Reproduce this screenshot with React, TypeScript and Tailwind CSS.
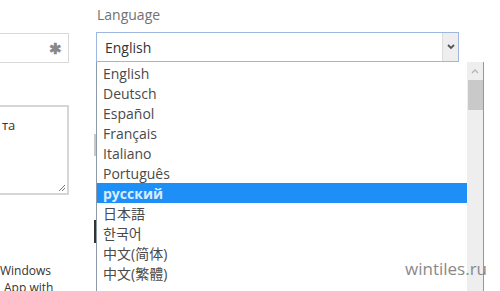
const languages = [
  'English',
  'Deutsch',
  'Español',
  'Français',
  'Italiano',
  'Português',
  'русский',
  '日本語',
  '한국어',
  '中文(简体)',
  '中文(繁體)',
]

const font = { fontFamily: '"Open Sans", "Noto Sans CJK JP", "Noto Sans CJK KR", sans-serif' }

export default function App() {
  return (
    <div
      className="relative w-[500px] h-[291px] overflow-hidden bg-white flex text-[#444]"
      style={font}
    >
      {/* left form column, cut at the window edge */}
      <div className="w-[109px] shrink-0 flex flex-col -ml-[40px]">
        <div className="shrink-0 mt-[33px] h-[30px] w-[109px] border border-[#d9d9d9] flex items-center justify-end pr-[6px]">
          <span className="text-[15px] text-[#888] font-bold leading-none">✱</span>
        </div>
        <div className="shrink-0 relative mt-[42px] h-[90px] w-[109px] border-2 border-[#d6d6d6] pl-[40px] pt-[5px]">
          <span className="text-[13px] text-[#333]">та</span>
          <svg className="absolute right-[1px] bottom-[1px]" width="9" height="9" viewBox="0 0 9 9">
            <path d="M8 2 L2 8 M8 5 L5 8" stroke="#777" strokeWidth="1" />
          </svg>
        </div>
        <div className="shrink-0 mt-[67px] pl-[40px] text-[12px] leading-[17px] text-[#333] whitespace-nowrap">
          <div>Windows</div>
          <div className="pl-[4px]">App with</div>
        </div>
      </div>

      {/* partly hidden bars behind the list */}
      <div className="ml-[25px] w-[2px] shrink-0 flex flex-col">
        <div className="shrink-0 mt-[134px] h-[22px] bg-[#c8c8c8]" />
        <div className="shrink-0 mt-[64px] h-[23px] bg-[#333]" />
      </div>

      {/* language field */}
      <div className="flex flex-col">
        <div className="shrink-0 h-[32px] pl-[1px] pt-[5px] text-[14px] leading-[20px] text-[#727272]">Language</div>
        <div className="shrink-0 w-[363px] h-[30px] border border-[#9eb7de] flex bg-white">
          <div className="flex-1 pl-[8px] flex items-center text-[14px] text-[#333]">English</div>
          <div className="w-[16px] bg-[#eeeeee] border-l border-[#dcdcdc] flex items-center justify-center">
            <svg width="8" height="6" viewBox="0 0 8 6">
              <path d="M1 1 L4 4 L7 1" fill="none" stroke="#555" strokeWidth="1.8" />
            </svg>
          </div>
        </div>
        <div className="shrink-0 w-[388px] h-[260px] border-l border-r border-[#8c9aa8] flex bg-white">
          <div className="flex-1 pt-[1px]">
            {languages.map((lang) => {
              const active = lang === 'русский'
              return (
                <div
                  key={lang}
                  className={
                    active
                      ? 'h-[20px] pl-[6px] flex items-center text-[14px] font-bold bg-[#1e8ff7] text-[#d9ecff]'
                      : 'h-[20px] pl-[6px] flex items-center text-[14px] text-[#4a4a4a]'
                  }
                >
                  {lang}
                </div>
              )
            })}
          </div>
          <div className="w-[16px] bg-[#eeeeee] flex flex-col items-center">
            <svg className="mt-[7px]" width="8" height="5" viewBox="0 0 8 5">
              <path d="M1 4 L4 1 L7 4" fill="none" stroke="#b5b5b5" strokeWidth="1.3" />
            </svg>
            <div className="mt-[6px] w-[15px] h-[30px] bg-[#c9c9c9]" />
          </div>
        </div>
      </div>

      <div className="absolute left-[405px] top-[259px] text-[17px] leading-[20px] text-[#8a8a8a]">wintiles.ru</div>
    </div>
  )
}
